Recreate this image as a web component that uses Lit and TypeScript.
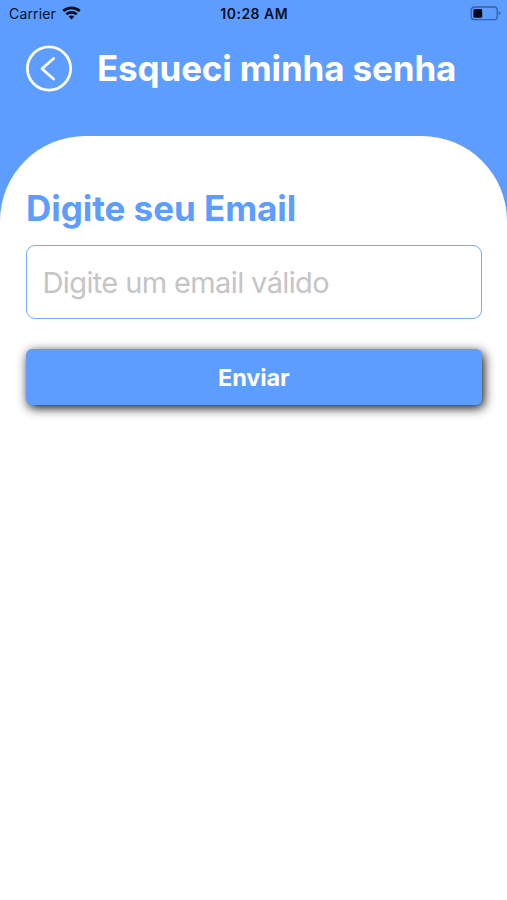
import { LitElement, html, css } from "lit";
import { customElement } from "lit/decorators.js";

@customElement("status-bar")
class StatusBar extends LitElement {
  static styles = css`
    :host { display: grid; grid-template-columns: 1fr auto 1fr; align-items: center; height: 27px; padding: 0 6px 0 9px; color: #07101f; font-size: 14px; line-height: 27px; }
    .carrier { display: flex; align-items: center; gap: 6px; letter-spacing: 0.15px; }
    .carrier svg { margin-top: -2px; }
    .time { font-weight: 600; letter-spacing: 0.5px; margin-right: 1.5px; }
    .battery { justify-self: end; }
    svg { display: block; }
  `;
  render() {
    return html`
      <div class="carrier"><span>Carrier</span>
        <svg width="19" height="14" viewBox="0 0 19 14" fill="none" stroke="#07101f" stroke-width="2.7">
          <path d="M1.2 5.1C5.8.7 13.2.7 17.8 5.1" />
          <path d="M4.3 8.3C7.2 5.6 11.8 5.6 14.7 8.3" />
          <path d="M6.7 10.6C8.3 9.2 10.7 9.2 12.3 10.6L9.5 13.5Z" fill="#07101f" stroke="none" />
        </svg>
      </div>
      <div class="time">10:28 AM</div>
      <svg class="battery" width="31" height="15" viewBox="0 0 31 15">
        <rect x="1.2" y="1" width="26" height="12.6" rx="3.2" fill="none" stroke="#36629f" stroke-width="1.3" />
        <rect x="3.4" y="3" width="8.8" height="8.8" rx="1.4" fill="#000a18" />
        <path d="M28.7 5.3Q32 7.2 28.7 9.2Z" fill="#36629f" />
      </svg>`;
  }
}

@customElement("app-root")
class AppRoot extends LitElement {
  static styles = css`
    :host { display: flex; flex-direction: column; height: 900px; background: #5c9dff; font-family: Inter, "Liberation Sans", sans-serif; overflow: hidden; }
    * { box-sizing: border-box; }
    header { display: flex; align-items: center; height: 84px; padding: 0 26px; gap: 25px; margin-bottom: 24.5px; }
    .back { display: block; width: 46px; height: 46px; padding: 0; border: 0; background: none; }
    .back svg { display: block; overflow: visible; }
    h1 { margin: -2px 0 0; color: #fff; font-size: 35px; line-height: 44px; font-weight: 700; letter-spacing: -0.14px; white-space: nowrap; }
    main { flex: 1; background: #fff; border-radius: 85px 85px 0 0; padding: 50px 25.5px 0 26px; display: flex; flex-direction: column; }
    label { color: #5c9dff; font-size: 35px; line-height: 44px; font-weight: 700; letter-spacing: -0.05px; margin-bottom: 15.5px; }
    input { height: 74px; width: 100%; border: 1.5px solid #75adf8; border-radius: 9px; padding: 0 15.5px; background: #fff; font: 400 29px/40px Inter, "Liberation Sans", sans-serif; letter-spacing: -0.62px; outline: none; }
    input::placeholder { color: #c5c5c7; opacity: 1; }
    .send { height: 56px; margin-top: 30px; padding: 2px 0 0; border: 0; border-radius: 6px; background: #5c9dff; color: #fff; font: 700 23.5px/32px Inter, "Liberation Sans", sans-serif; letter-spacing: -0.15px; box-shadow: 2px 3px 11px rgba(0,0,0,.95); }
  `;
  render() {
    return html`
      <status-bar></status-bar>
      <header>
        <button class="back" aria-label="Voltar">
          <svg width="46" height="46" viewBox="0 0 46 46" fill="none" stroke="#fff" stroke-linecap="round" stroke-linejoin="round">
            <circle cx="23" cy="22.5" r="21.6" stroke-width="2.8" />
            <path d="M27.6 12.5L16 22.7L27.6 33" stroke-width="2.8" />
          </svg>
        </button>
        <h1>Esqueci minha senha</h1>
      </header>
      <main>
        <label for="email">Digite seu Email</label>
        <input id="email" type="email" placeholder="Digite um email válido" />
        <button class="send">Enviar</button>
      </main>`;
  }
}
